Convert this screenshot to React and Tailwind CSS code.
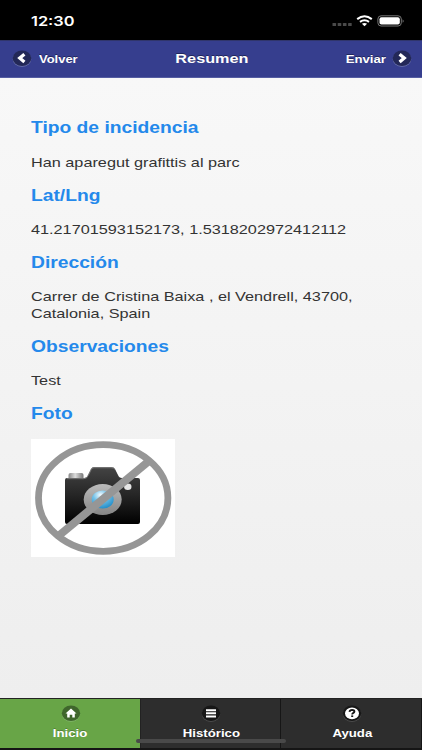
import React from 'react';

const Wide = ({ className = '', children }) => (
  <span className={`block whitespace-nowrap scale-x-[1.222] ${className}`}>{children}</span>
);

const Section = ({ title, lines }) => (
  <section>
    <h3 className="mb-[16.2px] text-[15.75px] leading-[20px] font-bold text-[#2489eb]">
      <Wide className="origin-left">{title}</Wide>
    </h3>
    {lines && (
      <p className="mb-[14.5px] text-[13.3px] leading-[16.6px] text-[#333]">
        {lines.map((line) => (
          <Wide key={line} className="origin-left">{line}</Wide>
        ))}
      </p>
    )}
  </section>
);

const ArrowIcon = ({ flip }) => (
  <svg width="20" height="17" viewBox="0 0 20 17" className={flip ? 'mb-[2px] -scale-x-100' : 'mb-[2px]'}>
    <ellipse cx="10" cy="9" rx="9.3" ry="7.8" fill="#7078b0" />
    <ellipse cx="10" cy="8.3" rx="9.3" ry="7.8" fill="#232858" />
    <path d="M12.4 4.3 L7.8 8.1 L12.4 11.9" fill="none" stroke="#fff" strokeWidth="3.3" />
  </svg>
);

const StatusBar = () => (
  <div className="flex h-10 items-start justify-between bg-black pl-[31px] pr-[17px] text-white">
    <Wide className="mt-[12px] origin-left font-['Inter'] text-[13.4px] leading-[18px] font-semibold">12:30</Wide>
    <svg width="73" height="14" viewBox="0 0 73 14" className="mt-[14px]">
      <g fill="#4a4a4a">
        <rect x="0.5" y="9" width="3.6" height="3" rx="0.6" />
        <rect x="5.7" y="9" width="3.6" height="3" rx="0.6" />
        <rect x="10.9" y="9" width="3.6" height="3" rx="0.6" />
        <rect x="16.1" y="9" width="3.6" height="3" rx="0.6" />
      </g>
      <g fill="none" stroke="#fff" strokeWidth="2">
        <path d="M25.2 5.1 Q32.5 -0.7 39.8 5.1" />
        <path d="M28 7.9 Q32.5 4.5 37 7.9" />
      </g>
      <path d="M29.9 9.8 Q32.5 8 35.1 9.8 L32.5 12.2 Z" fill="#fff" />
      <rect x="45.9" y="1.8" width="23.4" height="10.2" rx="3.2" fill="none" stroke="#777" strokeWidth="1" />
      <rect x="47.5" y="3.3" width="20.3" height="7.2" rx="1.9" fill="#fff" />
      <path d="M70.6 5.2 Q72.8 7 70.6 8.8 Z" fill="#777" />
    </svg>
  </div>
);

const Header = () => (
  <header className="grid h-[38px] grid-cols-3 items-center border-y border-t-[#30356b] border-b-[#555da2] bg-[#363e8e] px-[11.5px] font-bold text-white [text-shadow:0_-1px_0_#20265c]">
    <div className="flex items-center gap-[7px]">
      <ArrowIcon />
      <Wide className="origin-left text-[10.6px] leading-[15px]">Volver</Wide>
    </div>
    <h1 className="flex justify-center pl-[1px] text-[13.3px]">
      <Wide>Resumen</Wide>
    </h1>
    <div className="flex items-center justify-end gap-[6.5px] -mr-[1.7px]">
      <Wide className="origin-right text-[10.8px] leading-[15px]">Enviar</Wide>
      <ArrowIcon flip />
    </div>
  </header>
);

const NoPhoto = () => (
  <svg width="144" height="118" viewBox="0 0 144 118" className="mt-[-1px]">
    <defs>
      <linearGradient id="body" x1="0" y1="0" x2="0" y2="1">
        <stop offset="0" stopColor="#444" />
        <stop offset="0.5" stopColor="#252525" />
        <stop offset="1" stopColor="#000" />
      </linearGradient>
      <linearGradient id="ring" x1="0" y1="0" x2="0" y2="1">
        <stop offset="0" stopColor="#bbb" />
        <stop offset="1" stopColor="#858585" />
      </linearGradient>
      <linearGradient id="dial" x1="0" y1="0" x2="1" y2="0">
        <stop offset="0" stopColor="#888" />
        <stop offset="0.45" stopColor="#ddd" />
        <stop offset="1" stopColor="#777" />
      </linearGradient>
      <radialGradient id="lens" cx="0.4" cy="0.25" r="0.75">
        <stop offset="0" stopColor="#f4fbff" />
        <stop offset="0.45" stopColor="#72c1e8" />
        <stop offset="1" stopColor="#258fca" />
      </radialGradient>
    </defs>
    <rect width="144" height="118" fill="#fff" />
    <rect x="37.5" y="34" width="15" height="7" rx="2" fill="url(#dial)" />
    <path
      d="M36 39 H53 Q56 39 57 36 L60 30 Q61 28 63 28 H80 Q83 28 84 30 L87 36 Q88 39 91 39 H107 Q109 39 109 41 V83 Q109 85 107 85 H36 Q34 85 34 83 V41 Q34 39 36 39 Z"
      fill="url(#body)"
    />
    <path d="M36 39.7 H53 Q56 39.7 57.4 36.3 L60.3 30.3 Q61 28.7 63 28.7 H80 Q83 28.7 84 30.3" fill="none" stroke="#8a8a8a" strokeWidth="0.8" />
    <ellipse cx="71.7" cy="60.5" rx="19" ry="15.5" fill="url(#ring)" />
    <ellipse cx="71.7" cy="60.5" rx="11" ry="9.1" fill="url(#lens)" />
    <ellipse cx="96.8" cy="47.7" rx="3.7" ry="3.2" fill="#e6e6e6" />
    <path d="M28 96.5 L118 22" stroke="#969696" strokeWidth="8" />
    <ellipse cx="72.2" cy="59" rx="64.7" ry="53.3" fill="none" stroke="#969696" strokeWidth="6.8" />
  </svg>
);

const tabs = [
  { label: 'Inicio', icon: 'home' },
  { label: 'Histórico', icon: 'bars' },
  { label: 'Ayuda', icon: 'help' },
];

const TabIcon = ({ name }) => (
  <svg width="20" height="17" viewBox="0 0 20 17">
    <ellipse cx="10" cy="9" rx="9.2" ry="7.8" fill={name === 'home' ? '#83b86c' : '#555'} />
    <ellipse cx="10" cy="8.3" rx="9.2" ry="7.8" fill={name === 'home' ? '#3f662c' : '#171717'} />
    {name === 'home' && (
      <path d="M10 3.6 L15.5 8.6 H13.8 V12.5 H11.3 V9.8 H8.7 V12.5 H6.2 V8.6 H4.5 Z" fill="#fff" />
    )}
    {name === 'bars' && <path d="M5 5.2 H15 M5 8.3 H15 M5 11.4 H15" stroke="#fff" strokeWidth="2" />}
    {name === 'help' && (
      <>
        <ellipse cx="10" cy="8.3" rx="7" ry="5.9" fill="#fff" />
        <path d="M7.5 6.8 Q7.8 4.9 10.1 4.9 Q12.5 5 12.4 6.6 Q12.3 7.5 11.1 8 Q10.2 8.4 10.2 9.4" fill="none" stroke="#171717" strokeWidth="1.9" />
        <rect x="9.2" y="10.4" width="2" height="1.6" fill="#171717" />
      </>
    )}
  </svg>
);

const TabBar = () => (
  <nav className="relative flex h-[52px] border-t border-b-2 border-t-[#222] border-b-[#151515] bg-[#2d2d2d] font-bold text-white">
    {tabs.map(({ label, icon }, i) => (
      <div
        key={label}
        className={`flex flex-1 flex-col items-center border-r pt-[5.6px] pl-[1.5px] last:border-r-0 ${i === 0 ? 'border-[#222] bg-[#68a547]' : 'border-[#161616]'}`}
      >
        <TabIcon name={icon} />
        <Wide className="mt-[4.4px] text-[10.8px] leading-[14px] [text-shadow:0_-1px_0_#1114]">{label}</Wide>
      </div>
    ))}
    <div className="absolute top-[40px] left-[136px] h-[4px] w-[150px] rounded-full bg-[#494949]" />
  </nav>
);

const App = () => {
  return (
    <div className="flex h-[750px] w-[422px] flex-col overflow-hidden bg-white font-['Liberation_Sans',sans-serif]">
      <StatusBar />
      <Header />
      <main className="flex-1 bg-linear-to-b from-[#f8f8f8] to-[#eeeeee] px-[31px] pt-[40.4px]">
        <Section title="Tipo de incidencia" lines={['Han aparegut grafittis al parc']} />
        <Section title="Lat/Lng" lines={['41.21701593152173, 1.5318202972412112']} />
        <Section
          title="Dirección"
          lines={['Carrer de Cristina Baixa , el Vendrell, 43700,', 'Catalonia, Spain']}
        />
        <Section title="Observaciones" lines={['Test']} />
        <Section title="Foto" />
        <NoPhoto />
      </main>
      <TabBar />
    </div>
  );
};

export default App;
